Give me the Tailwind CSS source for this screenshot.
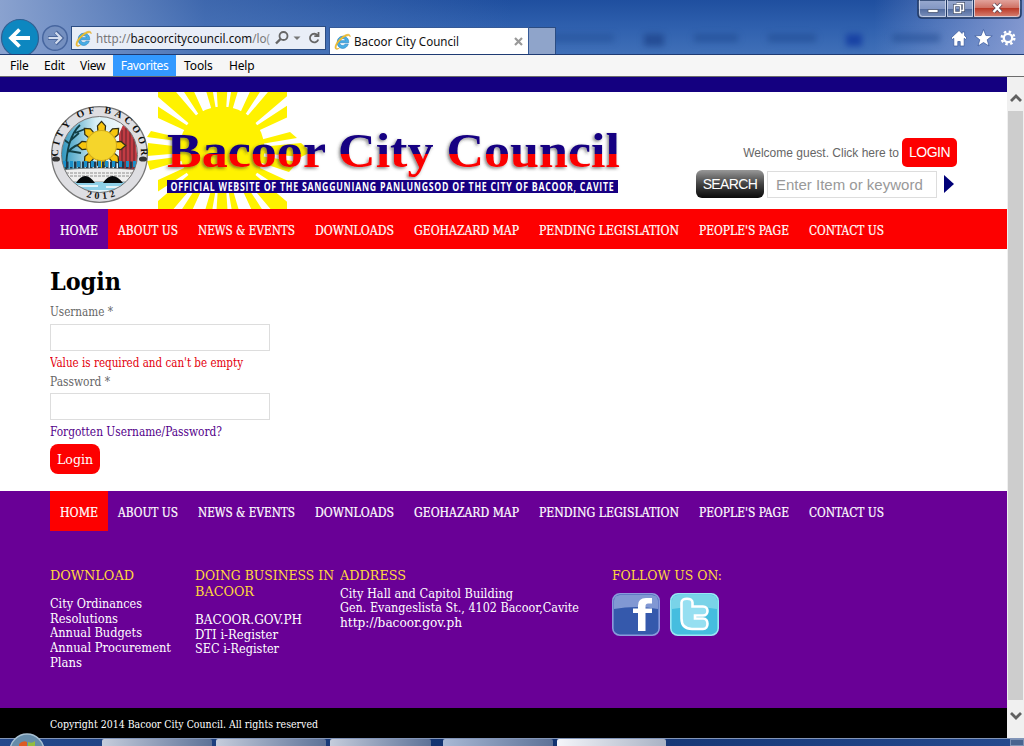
<!DOCTYPE html>
<html lang="en">
<head>
<meta charset="utf-8">
<title>Bacoor City Council</title>
<script src="https://cdn.jsdelivr.net/npm/@tailwindcss/browser@4"></script>
</head>
<body class="w-[1024px] h-[746px] overflow-hidden flex flex-col bg-white font-['DejaVu_Serif_Condensed','DejaVu_Serif',serif]">
<svg class="hidden">
  <symbol id="ie" viewBox="0 0 16 16">
    <path d="M13.8 9.2H5.4c.2 2.8 3.700 3.200 5 1.300h3C12.200 13.800 9.600 14.600 8 14.500 1.300 14.200 1.300 3.200 8.200 3c3.600-.1 5.900 2.600 5.600 6.200zM5.500 7.200h5.200C10.500 4.700 6 4.500 5.500 7.200z" fill="#48aee6" stroke="#2780be" stroke-width=".6" fill-rule="evenodd"/>
    <path d="M1.300 14.800C-.2 12.400 3.500 6.300 8.500 3c3.500-2.300 7-2.800 6.700.6C14.800 1.500 11.800 2.500 9 4.500 4 8 1.400 12.600 2.200 14.300c.6.800 2 .3 3-.3-1.500 1.400-3.200 1.900-3.900.8z" fill="#f5c52c" stroke="#dfa41c" stroke-width=".5"/>
  </symbol>
</svg>

<header class="relative h-[55px] shrink-0 flex items-end border-b border-[#1f3b73] bg-linear-to-b from-[#1f4f9f] via-[#2f60ae] to-[#4070b8] font-['Noto_Sans',sans-serif]">
  <div class="absolute inset-0 bg-linear-to-r from-[#8aa2cf] via-[#5378b7]/60 via-20% to-transparent to-50%"></div>
  <div class="absolute right-0 top-0 w-[150px] h-full bg-linear-to-r from-transparent to-[#98a6d8]/80"></div>
  <div class="absolute left-[550px] top-[34px] w-[390px] h-3 flex justify-between blur-[3px]">
    <i class="w-16 h-2 bg-[#1c458c]/40"></i><i class="w-5 h-3 bg-[#173a80]/60"></i><i class="w-11 h-2 bg-[#1c458c]/50"></i><i class="w-12 h-2 bg-[#1c458c]/50"></i><i class="w-4 h-3 bg-[#1038a0]/80"></i><i class="w-12 h-2 bg-[#1c458c]/50"></i>
  </div>
  <svg class="absolute left-0 top-0" width="72" height="54" viewBox="0 0 72 54">
    <circle cx="20" cy="38" r="18.500" fill="#0d87c0" stroke="#315f92" stroke-width="1.200"/>
    <path d="M30 38H12M19.500 29.500 11 38l8.500 8.500" fill="none" stroke="#fff" stroke-width="3.800"/>
    <circle cx="55" cy="38" r="12.300" fill="#7590c0" stroke="#47669f" stroke-width="1.500"/>
    <path d="M48 38h12M55.500 32l6 6-6 6" fill="none" stroke="#4b679b" stroke-width="4"/>
    <path d="M48.500 38h11M55.500 32.500l5.500 5.500-5.500 5.500" fill="none" stroke="#d2dcee" stroke-width="2.200"/>
  </svg>
  <div class="relative ml-[71px] mb-[4px] w-[255px] h-[24px] bg-[#e9eef7] border border-[#2b4c82] flex items-center pl-[3px] text-[12.500px]">
    <svg width="17" height="17" class="shrink-0"><use href="#ie"/></svg>
    <svg class="ml-1" width="174" height="22" font-size="12.800" font-family="Noto Sans"><text x="0" y="16" textLength="174" lengthAdjust="spacingAndGlyphs" fill="#777">http://<tspan fill="#111">bacoorcitycouncil.com</tspan>/lo<tspan fill="#999">(</tspan></text></svg>
    <svg class="absolute left-[203px] top-0" width="48" height="22" fill="none" stroke="#666" stroke-width="1.800"><circle cx="8.500" cy="9" r="4"/><path d="M5.500 12 1 16.500" stroke-width="2.400"/><path d="M18.500 9.500h7L22 13z" fill="#777" stroke="none"/><path d="M42.500 8.200A4.300 4.300 0 1 0 43.300 12.500M43.500 5v4.200h-4.200"/></svg>
  </div>
  <div class="relative ml-[3px] w-[200px] h-[27px] bg-white border-x border-t border-[#355a98] flex items-center pl-[4px] text-[12.500px] text-[#111]">
    <svg width="17" height="17"><use href="#ie"/></svg>
    <svg class="ml-[3px]" width="108" height="22"><text x="0" y="16" textLength="105" lengthAdjust="spacingAndGlyphs" fill="#111">Bacoor City Council</text></svg>
    <svg class="ml-auto mr-[5px]" width="9" height="9"><path d="M1 1l7 7M8 1 1 8" stroke="#999" stroke-width="2.200"/></svg>
  </div>
  <div class="relative w-[27px] h-[27px] bg-[#8fa4ca] border-r border-t border-[#2b4c82]"></div>
  <svg class="absolute right-0 top-0" width="108" height="54" viewBox="916 0 108 54">
    <defs><linearGradient id="w" x2="0" y2="1"><stop stop-color="#98a9cf"/><stop offset=".5" stop-color="#8397c3"/><stop offset=".5" stop-color="#506a9d"/><stop offset="1" stop-color="#8296c1"/></linearGradient>
    <linearGradient id="r" x2="0" y2="1"><stop stop-color="#e2a29b"/><stop offset=".45" stop-color="#cf7265"/><stop offset=".5" stop-color="#bb3a28"/><stop offset="1" stop-color="#d78375"/></linearGradient></defs>
    <path d="M918 0v14q0 4 4 4h95q4 0 4-4V0z" fill="url(#w)" stroke="#213964" stroke-width="1.500"/>
    <path d="M974 0v17h43q3 0 3-3V0z" fill="url(#r)"/>
    <path d="M919.500 0v13q0 3.500 3 3.500h23V0m2 0v16.500h25V0m2 0v16.500h42q3 0 3-3V0" fill="none" stroke="#dbe2f1" stroke-opacity=".75"/>
    <path d="M946.500 0v17m27-17v17" stroke="#213964"/>
    <path d="M928 9.500h10v3h-10z" fill="#fff" stroke="#4c5872" stroke-width=".8"/>
    <path d="M956.500 3.500h7v7h-2M954.500 5.500h6v7h-6z" fill="none" stroke="#485570" stroke-width="3"/><path d="M956.500 3.500h7v7h-2M954.500 5.500h6v7h-6z" fill="none" stroke="#fff" stroke-width="1.500"/>
    <path d="M993.500 4l7.500 8M1001 4l-7.500 8" stroke="#5c4653" stroke-width="4"/><path d="M993.500 4l7.500 8M1001 4l-7.500 8" stroke="#fff" stroke-width="2.500"/>
    <g fill="#fff" stroke="#34549a" stroke-width=".7">
      <path d="M959 30.500l-8 7.500 1.500 1.300 1.300-1V46h4v-4.500h2.400V46h4v-7.700l1.300 1 1.500-1.300-2.400-2.300V32h-2.400v1.500z"/>
      <path d="M983.500 29.500l2.400 6 6.300.3-5 4 1.800 6.200-5.500-3.500-5.500 3.500 1.800-6.200-5-4 6.300-.3z"/>
    </g>
    <circle cx="1008" cy="38" r="4.200" fill="none" stroke="#fff" stroke-width="2.300"/><circle cx="1008" cy="38" r="6.300" fill="none" stroke="#fff" stroke-width="2.400" stroke-dasharray="2.470"/>
  </svg>
</header>

<nav class="h-[22px] shrink-0 bg-[#f6f6f6] border-b border-[#6c6c6c] flex text-[12px] leading-[22px] text-black font-['Noto_Sans',sans-serif]">
  <span class="w-[44px] pl-[10px] tracking-[-0.100px]">File</span><span class="w-[36px] tracking-[-0.200px]">Edit</span><span class="w-[33px] tracking-[-0.300px]">View</span><span class="w-[63px] bg-[#3399ff] text-white text-center tracking-[-0.400px]">Favorites</span><span class="w-[53px] pl-[8px] tracking-[-0.100px]">Tools</span><span class="tracking-[-0.200px]">Help</span>
</nav>

<div class="flex h-[661px] shrink-0">
<main class="w-[1007px] flex flex-col">
  <div class="h-[15px] bg-[#140080]"></div>
  <div class="h-[117px] flex">
    <svg width="640" height="117" viewBox="0 92 640 117" class="shrink-0">
      <defs>
        <clipPath id="box"><path d="M158 92h129v117H158z"/></clipPath>
        <clipPath id="in"><circle cx="99.500" cy="154.500" r="38"/></clipPath>
        <linearGradient id="two" gradientUnits="userSpaceOnUse" x1="0" x2="0" y1="130" y2="178"><stop offset=".5" stop-color="#170082"/><stop offset=".5" stop-color="#fb0000"/></linearGradient>
        <linearGradient id="sky"><stop stop-color="#2d95bd"/><stop offset=".45" stop-color="#d6eef5"/><stop offset="1" stop-color="#fff"/></linearGradient>
        <filter id="sh" x="-5%" y="-20%" width="110%" height="150%"><feDropShadow dx="-1.500" dy="1.500" stdDeviation="1.400" flood-color="#333" flood-opacity=".6"/></filter>
        <path id="ray" d="M-4-38-7.500-92h15L4-38zM-6-39-15-92h-11L-10-38zM6-39 15-92h11L10-38z"/>
        <path id="arc" d="M61 170A41.500 41.500 0 1 1 138 170"/>
        <path id="arc2" d="M76 192.500A45 45 0 0 0 123 192.500"/>
        <path id="leaf" d="M0-21 3.500-17 3-11H-3L-3.500-17z"/>
      </defs>
      <g fill="#fff200">
        <g clip-path="url(#box)"><circle cx="222" cy="149" r="42.500"/>
          <g transform="translate(222 149)"><use href="#ray"/><use href="#ray" transform="rotate(180)"/><use href="#ray" transform="rotate(45) scale(1.250 1)"/><use href="#ray" transform="rotate(135) scale(1.250 1)"/><use href="#ray" transform="rotate(225) scale(1.250 1)"/><use href="#ray" transform="rotate(315) scale(1.250 1)"/></g>
        </g>
        <path d="M184 142 147 137l4-6 34 8zM182 147l-34-4-1 13 35-3zM183 156l-36 5 3 9 34-10z"/>
        <path d="M260 140l30-8 7 6-36 6zM260 147l41-4 10 9-10 5-41-4zM260 156l38 6-9 10-30-10z"/>
      </g>
      <circle cx="99.500" cy="154.500" r="47.800" fill="#dedee2" stroke="#777" stroke-width="1.300"/>
      <g clip-path="url(#in)">
        <circle cx="99.500" cy="154.500" r="38" fill="url(#sky)"/>
        <path d="M119 172v-38l4-9h8v9h4l4 40z" fill="#c23b43"/>
        <path d="M122 130v40m4-42v42m4-42v42m4-34v35" stroke="#6e2930" stroke-width="1.200"/>
        <path d="M66 172q0-34 14-47M68 152q7-8 15-8M70 144l-7-5m12-6 10-4m-14 11 8-7m-10 18 12 2" fill="none" stroke="#123f45" stroke-width="1.800"/>
        <g transform="translate(101.500 145.500)" fill="#f8c60d" stroke="#303018" stroke-width="1.100"><use href="#leaf" transform="scale(1.150)"/><use href="#leaf" transform="rotate(45) scale(1.150)"/><use href="#leaf" transform="rotate(90) scale(1.150)"/><use href="#leaf" transform="rotate(135) scale(1.150)"/><use href="#leaf" transform="rotate(180) scale(1.150)"/><use href="#leaf" transform="rotate(225) scale(1.150)"/><use href="#leaf" transform="rotate(270) scale(1.150)"/><use href="#leaf" transform="rotate(315) scale(1.150)"/><circle r="15" fill="#f5d52b" stroke="#d4ad1c"/></g>
        <path d="M62 165h75" stroke="#20364a" stroke-width="7" stroke-dasharray="2.500 1.500"/>
        <path d="M63 164h75" stroke="#198fca" stroke-width="6" stroke-dasharray="3 4"/>
        <path d="M60 170q40-4 80 0v12H60z" fill="#efefef" stroke="#555" stroke-width=".6"/>
        <path d="M62 173h76M62 176h76" stroke="#777" stroke-width=".8" stroke-dasharray="3 1"/>
        <path d="M60 182h80v14H60z" fill="#8ed0e8"/>
        <path d="M76 183q9-14 19 0zm27 0q9-14 20 0z" fill="#05080a"/>
        <path d="M78 186h20m8 1h14m-34 4h26" stroke="#fff" stroke-width="1.500"/>
      </g>
      <circle cx="99.500" cy="154.500" r="38" fill="none" stroke="#777"/>
      <ellipse cx="56" cy="159" rx="4" ry="2.600" fill="#333"/><ellipse cx="143" cy="159" rx="4" ry="2.600" fill="#333"/>
      <g font-family="Liberation Serif" font-weight="bold" font-size="10" fill="#111">
        <text><textPath href="#arc" startOffset="14" textLength="133">CITY OF BACOOR</textPath></text>
        <text><textPath href="#arc2" startOffset="11" textLength="30">2012</textPath></text>
      </g>
      <text x="167" y="167" textLength="453" lengthAdjust="spacingAndGlyphs" font-family="Liberation Serif" font-weight="bold" font-size="48" fill="url(#two)" filter="url(#sh)">Bacoor City Council</text>
      <path d="M167 180h451v13H167z" fill="#170082"/>
      <text x="170.500" y="190.500" textLength="444" lengthAdjust="spacingAndGlyphs" font-family="Open Sans" font-weight="bold" font-size="11.500" letter-spacing="1" fill="#fff">OFFICIAL WEBSITE OF THE SANGGUNIANG PANLUNGSOD OF THE CITY OF BACOOR, CAVITE</text>
    </svg>
    <div class="ml-[56px] w-[262px] pt-[46px] font-['Liberation_Sans',sans-serif]">
      <div class="flex items-center justify-end gap-[3px] text-[12px] text-[#666] pr-[1px]"><span>Welcome guest. Click here to</span><button class="w-[55px] h-[29px] rounded-[5px] bg-[#fd0000] text-white text-[14px] tracking-[-0.500px]">LOGIN</button></div>
      <div class="flex items-center mt-[3px]"><button class="w-[68px] h-[28px] rounded-[6px] bg-linear-to-b from-[#999] via-[#444] to-[#0b0b0b] text-white text-[14px] tracking-[-0.600px]">SEARCH</button><div class="ml-[3px] w-[170px] h-[27px] border border-[#ddd] text-[#999] text-[15px] leading-[25px] pl-[8px]">Enter Item or keyword</div><svg class="ml-[7px]" width="10" height="18"><path d="M0 0l10 9-10 9z" fill="#000078"/></svg></div>
    </div>
  </div>
  <nav class="h-[40px] shrink-0 bg-[#fd0000] pl-[50px] flex">
    <div class="w-[58px] bg-[#690096]"></div>
    <svg class="-ml-[58px]" width="860" height="40" font-size="12" fill="#fff"><g id="menu" stroke="#fff" stroke-width=".2"><text x="10" y="26" textLength="38" lengthAdjust="spacingAndGlyphs">HOME</text><text x="68" y="26" textLength="60" lengthAdjust="spacingAndGlyphs">ABOUT US</text><text x="148" y="26" textLength="97" lengthAdjust="spacingAndGlyphs">NEWS &amp; EVENTS</text><text x="265" y="26" textLength="79" lengthAdjust="spacingAndGlyphs">DOWNLOADS</text><text x="364" y="26" textLength="105" lengthAdjust="spacingAndGlyphs">GEOHAZARD MAP</text><text x="489" y="26" textLength="140" lengthAdjust="spacingAndGlyphs">PENDING LEGISLATION</text><text x="649" y="26" textLength="90" lengthAdjust="spacingAndGlyphs">PEOPLE'S PAGE</text><text x="759" y="26" textLength="75" lengthAdjust="spacingAndGlyphs">CONTACT US</text></g></svg>
  </nav>
  <section class="h-[242px] shrink-0 pl-[50px] pt-[16px] flex flex-col text-[12px] text-[#666]">
    <svg width="80" height="34"><text x="0" y="25" textLength="71" lengthAdjust="spacingAndGlyphs" font-size="23.500" font-weight="bold" fill="#000">Login</text></svg>
    <svg class="mt-[3px]" width="220" height="20"><text x="0" y="14" textLength="63" lengthAdjust="spacingAndGlyphs" fill="#666">Username *</text></svg>
    <div class="mt-[2px] w-[220px] h-[27px] shrink-0 border border-[#ddd]"></div>
    <svg class="mt-[2px]" width="220" height="20"><text x="0" y="14" textLength="193" lengthAdjust="spacingAndGlyphs" fill="#e3000d">Value is required and can't be empty</text></svg>
    <svg width="220" height="20"><text x="0" y="13" textLength="60" lengthAdjust="spacingAndGlyphs" fill="#666">Password *</text></svg>
    <div class="w-[220px] h-[27px] shrink-0 border border-[#ddd]"></div>
    <svg class="mt-[3px]" width="220" height="20"><text x="0" y="13" textLength="172" lengthAdjust="spacingAndGlyphs" fill="#53008a">Forgotten Username/Password?</text></svg>
    <button class="mt-[1px] w-[50px] h-[30px] rounded-[8px] bg-[#fd0000]"><svg width="50" height="30"><text x="7" y="20" textLength="36" lengthAdjust="spacingAndGlyphs" font-size="13.500" fill="#fff">Login</text></svg></button>
  </section>
  <footer class="h-[217px] shrink-0 bg-[#690096] pl-[50px]">
    <div class="flex h-[40px]"><div class="w-[58px] bg-[#fd0000]"></div><svg class="-ml-[58px]" width="860" height="40" font-size="12" fill="#fff"><use href="#menu"/></svg></div>
    <div class="flex pt-[36px] text-white">
      <svg width="145" height="130" font-size="12.500" fill="#fff"><text x="0" y="13" font-size="13" textLength="84" lengthAdjust="spacingAndGlyphs" fill="#ffd83d">DOWNLOAD</text><text x="0" y="41" textLength="92" lengthAdjust="spacingAndGlyphs">City Ordinances</text><text x="0" y="56" textLength="68" lengthAdjust="spacingAndGlyphs">Resolutions</text><text x="0" y="70" textLength="92" lengthAdjust="spacingAndGlyphs">Annual Budgets</text><text x="0" y="85" textLength="121" lengthAdjust="spacingAndGlyphs">Annual Procurement</text><text x="0" y="100" textLength="32" lengthAdjust="spacingAndGlyphs">Plans</text></svg>
      <svg width="145" height="130" font-size="12.500" fill="#fff"><g font-size="13" fill="#ffd83d"><text x="0" y="13" textLength="139" lengthAdjust="spacingAndGlyphs">DOING BUSINESS IN</text><text x="0" y="29" textLength="59" lengthAdjust="spacingAndGlyphs">BACOOR</text></g><text x="0" y="57" textLength="107" lengthAdjust="spacingAndGlyphs">BACOOR.GOV.PH</text><text x="0" y="72" textLength="83" lengthAdjust="spacingAndGlyphs">DTI i-Register</text><text x="0" y="86" textLength="84" lengthAdjust="spacingAndGlyphs">SEC i-Register</text></svg>
      <svg width="272" height="130" font-size="12.500" fill="#fff"><text x="0" y="13" font-size="13" textLength="66" lengthAdjust="spacingAndGlyphs" fill="#ffd83d">ADDRESS</text><text x="0" y="31" textLength="173" lengthAdjust="spacingAndGlyphs">City Hall and Capitol Building</text><text x="0" y="45" textLength="239" lengthAdjust="spacingAndGlyphs">Gen. Evangeslista St., 4102 Bacoor,Cavite</text><text x="0" y="60" textLength="122" lengthAdjust="spacingAndGlyphs">http://bacoor.gov.ph</text></svg>
      <div><svg width="120" height="20"><text x="0" y="13" font-size="13" textLength="110" lengthAdjust="spacingAndGlyphs" fill="#ffd83d">FOLLOW US ON:</text></svg>
        <div class="flex mt-[6px] gap-[10px]">
          <svg width="48" height="43"><rect x=".8" y=".8" width="46.400" height="41.400" rx="7" fill="#3559ac" stroke="#8b9bdc" stroke-width="1.600"/><path d="M2 16V8q0-6 6-6h32q6 0 6 6v8q-22-4-44 0z" fill="#8198d3"/><path d="M26 38V20h-5v-4.500h5v-3Q26 5 34 5h6v5.500h-4q-2.500 0-2.500 2.500v2.500H40V20h-6.500v18z" fill="#fff"/></svg>
          <svg width="49" height="43"><rect x=".8" y=".8" width="47.400" height="41.400" rx="7" fill="#45bddf" stroke="#9be6f4" stroke-width="1.600"/><path d="M2 16V8q0-6 6-6h33q6 0 6 6v8q-22-4-45 0z" fill="#79d3e8"/><path d="M11.500 9.500c0-5 11-5 11 0v4H33c6 0 6 9 0 9h-8v3h8c6 0 6 10.500 0 10.500H22q-10.500 0-10.500-10.500z" fill="#96dff1" stroke="#fff" stroke-width="2.600"/></svg>
        </div></div>
    </div>
  </footer>
  <div class="h-[30px] shrink-0 bg-black pl-[50px]"><svg width="300" height="30"><text x="0" y="20" font-size="11" textLength="268" lengthAdjust="spacingAndGlyphs" fill="#fff">Copyright 2014 Bacoor City Council. All rights reserved</text></svg></div>
</main>
<aside class="w-[17px] bg-[#f0f0f0] flex flex-col items-center">
  <svg width="16" height="34"><path d="M3 24l5-5 5 5" fill="none" stroke="#606060" stroke-width="2.800"/></svg>
  <div class="w-[15px] h-[589px] bg-[#cdcdcd]"></div>
  <svg width="16" height="38"><path d="M3 13l5 5 5-5" fill="none" stroke="#606060" stroke-width="2.800"/></svg>
</aside>
</div>

<footer class="relative h-[8px] shrink-0 bg-linear-to-r from-[#24498c] via-[#10306c] to-[#254a8e] border-t border-[#8295b8] flex pl-[102px]">
  <div class="flex gap-[4px]">
    <i class="w-[110px] bg-linear-to-r from-[#c6cddc] to-[#5e7297] rounded-t-[2px]"></i><i class="w-[110px] bg-linear-to-r from-[#c6cddc] to-[#5e7297] rounded-t-[2px]"></i><i class="w-[101px] bg-linear-to-r from-[#c6cddc] to-[#5e7297] rounded-t-[2px]"></i><i class="ml-[8px] w-[110px] bg-linear-to-r from-[#a9b9d5] to-[#5e7297] rounded-t-[2px]"></i><i class="w-[109px] bg-linear-to-r from-[#f5f6fa] to-[#a9b2c4] rounded-t-[2px]"></i>
  </div>
  <i class="ml-auto w-[14px] border border-[#7d92b5] bg-[#49648f]"></i>
  <svg class="absolute left-[8px] bottom-0" width="38" height="13" viewBox="8 733 38 13"><circle cx="27" cy="751" r="17" fill="#668ca9" stroke="#a9c1d3" stroke-width="1.500"/><path d="M19 744q4-4 8-2v4h-8z" fill="#dd5b25"/><path d="M28 742q4 2 7-1v5h-7z" fill="#93bd3e"/></svg>
</footer>
</body>
</html>
